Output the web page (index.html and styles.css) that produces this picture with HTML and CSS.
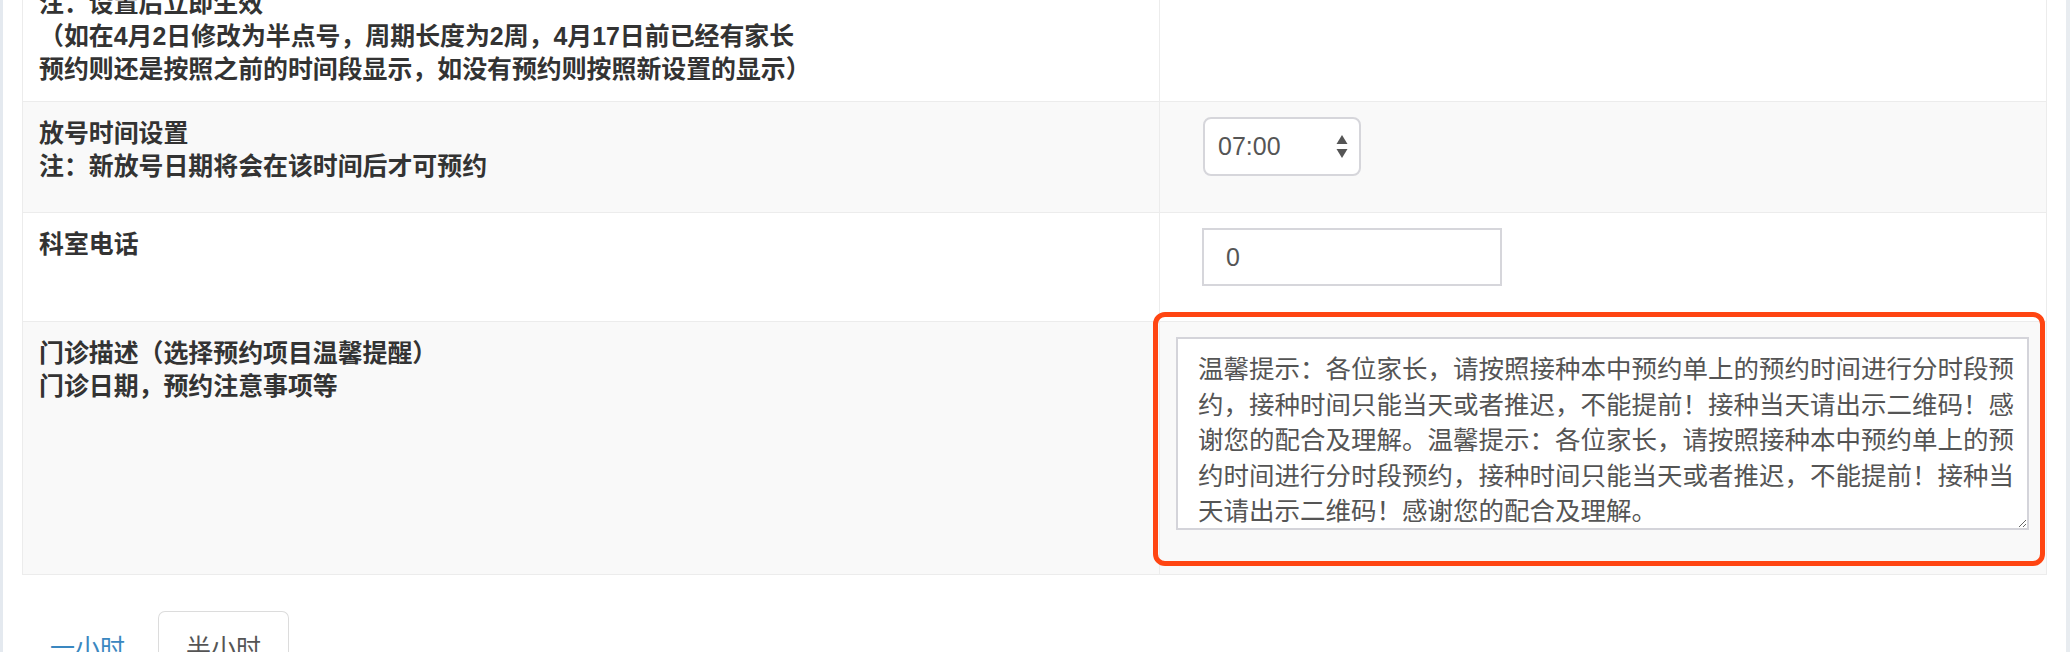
FILE: index.html
```html
<!DOCTYPE html>
<html lang="zh-CN">
<head>
<meta charset="utf-8">
<title>门诊设置</title>
<link rel="stylesheet" href="styles.css">
</head>
<body>
<div class="page">
  <div class="content">
    <table class="settings">
      <colgroup><col class="col-label"><col class="col-field"></colgroup>
      <tbody>
        <tr class="row-plain">
          <td class="label">注：设置后立即生效<br>（如在4月2日修改为半点号，周期长度为2周，4月17日前已经有家长<br>预约则还是按照之前的时间段显示，如没有预约则按照新设置的显示）</td>
          <td class="field"></td>
        </tr>
        <tr class="row-striped">
          <td class="label">放号时间设置<br>注：新放号日期将会在该时间后才可预约</td>
          <td class="field">
            <div class="select">
              <span class="select-value">07:00</span>
              <svg class="select-arrows" width="14" height="28" viewBox="0 0 14 28"><path d="M7 2 L12.5 11 L1.5 11 Z" fill="#555"/><path d="M1.5 16 L12.5 16 L7 25 Z" fill="#555"/></svg>
            </div>
          </td>
        </tr>
        <tr class="row-plain">
          <td class="label">科室电话</td>
          <td class="field">
            <input class="text-input" type="text" value="0">
          </td>
        </tr>
        <tr class="row-striped">
          <td class="label">门诊描述（选择预约项目温馨提醒）<br>门诊日期，预约注意事项等</td>
          <td class="field field-annotated">
            <textarea class="desc">温馨提示：各位家长，请按照接种本中预约单上的预约时间进行分时段预约，接种时间只能当天或者推迟，不能提前！接种当天请出示二维码！感谢您的配合及理解。温馨提示：各位家长，请按照接种本中预约单上的预约时间进行分时段预约，接种时间只能当天或者推迟，不能提前！接种当天请出示二维码！感谢您的配合及理解。</textarea>
            <div class="annotation"></div>
          </td>
        </tr>
      </tbody>
    </table>
    <ul class="tabs">
      <li><a class="tab" href="#">一小时</a></li>
      <li><a class="tab tab-active" href="#">半小时</a></li>
    </ul>
  </div>
</div>
</body>
</html>
```

FILE: styles.css
```css
html, body {
  margin: 0;
  padding: 0;
  background: #fff;
}
body {
  font-family: "Liberation Sans", "Noto Sans CJK SC", sans-serif;
  color: #333;
  height: 652px;
  overflow: hidden;
}
.page {
  height: 652px;
  box-sizing: border-box;
  border-left: 3px solid #e4e9ef;
  border-right: 4px solid #e8ecf0;
  padding: 0 19px;
  overflow: hidden;
}
.content {
  margin-top: -29px;
}
.settings {
  width: 100%;
  border-collapse: collapse;
  table-layout: fixed;
}
.col-label {
  width: 1137px;
}
.settings td {
  border: 1px solid #ececec;
  vertical-align: top;
  padding: 15px 16px;
}
.row-plain td {
  background: #fff;
}
.row-striped td {
  background: #f9f9f9;
}
.label {
  font-size: 24.9px;
  line-height: 33px;
  font-weight: bold;
  color: #333;
}
.field {
  font-size: 25px;
}
.select {
  display: flex;
  align-items: center;
  justify-content: space-between;
  box-sizing: border-box;
  width: 158px;
  height: 59px;
  margin: 0 0 21px 27px;
  padding: 0 10px 0 13px;
  background: #fff;
  border: 2px solid #d6d6db;
  border-radius: 8px;
  color: #555;
  font-size: 25px;
}
.select-arrows {
  display: block;
}
.text-input {
  display: block;
  box-sizing: border-box;
  width: 300px;
  height: 58px;
  margin: 0 0 20px 26px;
  padding: 0 22px;
  border: 2px solid #d6d6db;
  border-radius: 0;
  background: #fff;
  color: #555;
  font-family: "Liberation Sans", "Noto Sans CJK SC", sans-serif;
  font-size: 25px;
  outline: none;
}
.field-annotated {
  position: relative;
}
.desc {
  display: block;
  box-sizing: border-box;
  width: 853px;
  height: 193px;
  margin: 0 0 29px 0;
  padding: 10px 10px 0 20px;
  border: 2px solid #d4d4da;
  border-radius: 0;
  background: #fff;
  color: #555;
  font-family: "Noto Sans CJK SC", sans-serif;
  font-size: 25.5px;
  line-height: 35.6px;
  overflow: hidden;
  resize: both;
  outline: none;
}
.annotation {
  position: absolute;
  left: -7px;
  top: -10px;
  width: 892px;
  height: 254px;
  box-sizing: border-box;
  border: 5px solid #ff4512;
  border-radius: 12px;
  pointer-events: none;
}
.tabs {
  display: flex;
  list-style: none;
  margin: 36px 0 0 0;
  padding: 0;
}
.tabs li {
  margin-right: 5px;
}
.tab {
  display: block;
  padding: 18px 27px;
  border: 1px solid transparent;
  border-radius: 7px 7px 0 0;
  font-size: 25px;
  line-height: 33px;
  color: #3a87c0;
  text-decoration: none;
  font-family: "Noto Sans CJK SC", sans-serif;
}
.tab-active {
  color: #555;
  border-color: #dcdcdc #dcdcdc transparent;
}
```
